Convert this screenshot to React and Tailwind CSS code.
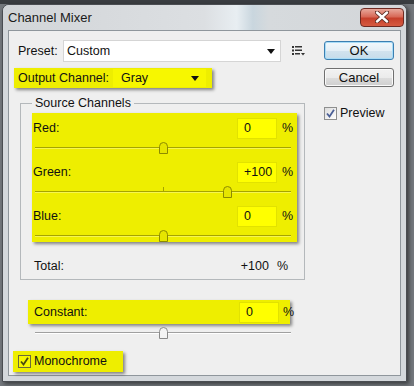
import React from "react";

function Thumb({ white }) {
  return (
    <svg width="9" height="12" viewBox="0 0 9 12" className="block">
      <path
        d="M0.5 4.5 Q0.5 0.5 4.5 0.5 Q8.5 0.5 8.5 4.5 L8.5 11.5 L0.5 11.5 Z"
        fill={white ? "#f4f4f4" : "#e6e500"}
        stroke={white ? "#8a8a8a" : "#8c8b00"}
        strokeWidth="1"
      />
    </svg>
  );
}

function Slider({ value, white }) {
  const pct = 50 + (value / 200) * 50;
  return (
    <div className="relative ml-[3px] w-[256px] h-[12px]">
      <div
        className={
          white
            ? "absolute left-0 right-0 top-[5px] h-[2px] border-t border-[#a0a0a0] border-b border-b-white"
            : "absolute left-0 right-0 top-[5px] h-[2px] border-t border-[#a5a400] border-b border-b-[#f6f650]"
        }
      />
      <div
        className={
          white
            ? "absolute left-[128px] top-[1px] w-px h-[4px] bg-[#a0a0a0]"
            : "absolute left-[128px] top-[1px] w-px h-[4px] bg-[#a5a400]"
        }
      />
      <div className="absolute top-0" style={{ left: `calc(${pct}% - 4px)` }}>
        <Thumb white={white} />
      </div>
    </div>
  );
}

function ChannelRow({ label, value, mt }) {
  return (
    <div className={`flex items-center h-[21px] ${mt}`}>
      <span className="ml-[1px] flex-1">{label}</span>
      <div className="w-[40px] h-[21px] bg-[#ffff00] border border-[#e2e200] flex items-center pl-[6px]">
        {value}
      </div>
      <span className="ml-[5px] mr-[6px] w-[9px]">%</span>
    </div>
  );
}

function Check({ yellow }) {
  return (
    <div
      className={
        yellow
          ? "w-[13px] h-[13px] border border-[#6b6b3a] bg-[#f6f600] flex items-center justify-center"
          : "w-[13px] h-[13px] border border-[#8e8f8f] bg-[linear-gradient(135deg,#dcdcdc,#ffffff)] flex items-center justify-center"
      }
    >
      <svg width="9" height="9" viewBox="0 0 9 9">
        <path
          d="M1 4.5 L3.5 7.5 L8 0.8"
          fill="none"
          stroke={yellow ? "#4a4a10" : "#4a5f97"}
          strokeWidth="1.8"
        />
      </svg>
    </div>
  );
}

export default function App() {
  return (
    <div className="w-[414px] h-[386px] overflow-hidden bg-[#74787d] font-['Liberation_Sans',Arial,sans-serif] text-[12.5px] text-[#111]">
      <div className="h-[4px] bg-[#3a3d41]" />
      <div className="ml-[2px] w-[405px] h-[378px] rounded-t-[7px] border border-[#4a4d52] bg-[#d4d8dc] flex flex-col px-[5px] pb-[5px] shadow-[2px_2px_4px_rgba(0,0,0,0.5)]">
        <div className="-mx-[5px] px-[5px] h-[25px] flex items-center justify-between rounded-t-[6px] bg-[linear-gradient(90deg,#d2d5d8_0%,#dcdfe2_50%,#e8eef2_58%,#c9d6de_62%,#d6dadd_66%,#d3d6d9_100%)]">
          <span className="text-[13px] mt-[1px] text-[#1a1a1a]">Channel Mixer</span>
          <div className="-mr-[3px] mt-[-1px] w-[44px] h-[19px] rounded-[4px] border border-[#6e2a22] bg-[linear-gradient(180deg,#e8a89b_0%,#d86a58_45%,#c6402b_55%,#d65a40_100%)] flex items-center justify-center">
            <svg width="14" height="12" viewBox="0 0 14 12">
              <path d="M2 1.5 L12 10.5 M12 1.5 L2 10.5" stroke="#5a2a22" strokeWidth="4.2" strokeLinecap="round" />
              <path d="M2 1.5 L12 10.5 M12 1.5 L2 10.5" stroke="#ffffff" strokeWidth="2.4" strokeLinecap="round" />
            </svg>
          </div>
        </div>
        <div className="flex-1 border border-[#8f969c] bg-[#efefef] flex">
          {/* left column */}
          <div className="w-[315px] flex flex-col">
            <div className="mt-[9px] h-[22px] flex items-center">
              <span className="ml-[9px] w-[45px]">Preset:</span>
              <div className="w-[218px] h-[22px] border border-[#d5d5d5] bg-white flex items-center justify-between">
                <span className="ml-[3px]">Custom</span>
                <svg width="8" height="5" viewBox="0 0 8 5" className="mr-[5px]">
                  <path d="M0 0 H8 L4 5 Z" fill="#111" />
                </svg>
              </div>
              <svg width="13" height="10" viewBox="0 0 13 10" className="ml-[11px]">
                <rect x="0" y="0" width="2" height="2" fill="#333" />
                <rect x="3" y="0" width="7" height="1.5" fill="#333" />
                <rect x="0" y="3.5" width="2" height="2" fill="#333" />
                <rect x="3" y="3.5" width="7" height="1.5" fill="#333" />
                <rect x="0" y="7" width="2" height="2" fill="#333" />
                <rect x="3" y="7" width="5" height="1.5" fill="#333" />
                <path d="M9 7 H13 L11 9.5 Z" fill="#333" />
              </svg>
            </div>

            <div className="mt-[6px] ml-[5px] w-[198px] h-[20px] bg-[#eeee00] shadow-[2px_2px_3px_rgba(0,0,0,0.45)] flex items-center">
              <span className="ml-[4px] w-[95px]">Output Channel:</span>
              <div className="w-[93px] h-[18px] bg-[#f7f700] flex items-center justify-between">
                <span className="ml-[8px]">Gray</span>
                <svg width="8" height="5" viewBox="0 0 8 5" className="mr-[7px]">
                  <path d="M0 0 H8 L4 5 Z" fill="#111" />
                </svg>
              </div>
            </div>

            <fieldset className="mt-[8px] ml-[11px] w-[285px] border border-[#b4b8bb] pb-[5px]">
              <legend className="ml-[11px] px-[3px] leading-[14px]">Source Channels</legend>
              <div className="mt-[3px] ml-[11px] w-[265px] h-[129px] bg-[#eeee00] shadow-[2px_2px_3px_rgba(0,0,0,0.45)] flex flex-col">
                <ChannelRow label="Red:" value="0" mt="mt-[5px]" />
                <div className="mt-[3px]"><Slider value={0} /></div>
                <ChannelRow label="Green:" value="+100" mt="mt-[8px]" />
                <div className="mt-[3px]"><Slider value={100} /></div>
                <ChannelRow label="Blue:" value="0" mt="mt-[8px]" />
                <div className="mt-[3px]"><Slider value={0} /></div>
              </div>
              <div className="mt-[16px] h-[16px] flex items-center">
                <span className="ml-[13px] flex-1">Total:</span>
                <span>+100</span>
                <span className="ml-[8px] mr-[16px]">%</span>
              </div>
            </fieldset>

            <div className="mt-[20px] ml-[19px] w-[262px] h-[24px] bg-[#eeee00] shadow-[2px_2px_3px_rgba(0,0,0,0.45)] flex items-center">
              <span className="ml-[6px] flex-1">Constant:</span>
              <div className="w-[40px] h-[21px] bg-[#ffff00] border border-[#e2e200] flex items-center pl-[6px]">0</div>
              <span className="ml-[4px] -mr-[2px] w-[9px]">%</span>
            </div>
            <div className="mt-[3px] ml-[23px]"><Slider value={0} white /></div>

            <div className="mt-[12px] ml-[4px] w-[110px] h-[21px] bg-[#eeee00] shadow-[2px_2px_3px_rgba(0,0,0,0.45)] flex items-center">
              <div className="ml-[5px]"><Check yellow /></div>
              <span className="ml-[3px]">Monochrome</span>
            </div>
          </div>

          {/* right column */}
          <div className="w-[70px] flex flex-col">
            <div className="mt-[10px] h-[19px] rounded-[3px] border border-[#3c7fb1] shadow-[inset_0_0_0_1px_#a8dcf7] bg-[linear-gradient(180deg,#f2f8fc_0%,#e4eff6_50%,#d2e3ee_51%,#c6dcea_100%)] flex items-center justify-center text-[13px]">
              OK
            </div>
            <div className="mt-[8px] h-[19px] rounded-[3px] border border-[#707070] shadow-[inset_0_0_0_1px_#fafafa] bg-[linear-gradient(180deg,#f2f2f2_0%,#ebebeb_50%,#dddddd_51%,#cfcfcf_100%)] flex items-center justify-center text-[13px]">
              Cancel
            </div>
            <div className="mt-[17px] flex items-center">
              <Check />
              <span className="ml-[3px]">Preview</span>
            </div>
          </div>
        </div>
      </div>
    </div>
  );
}
